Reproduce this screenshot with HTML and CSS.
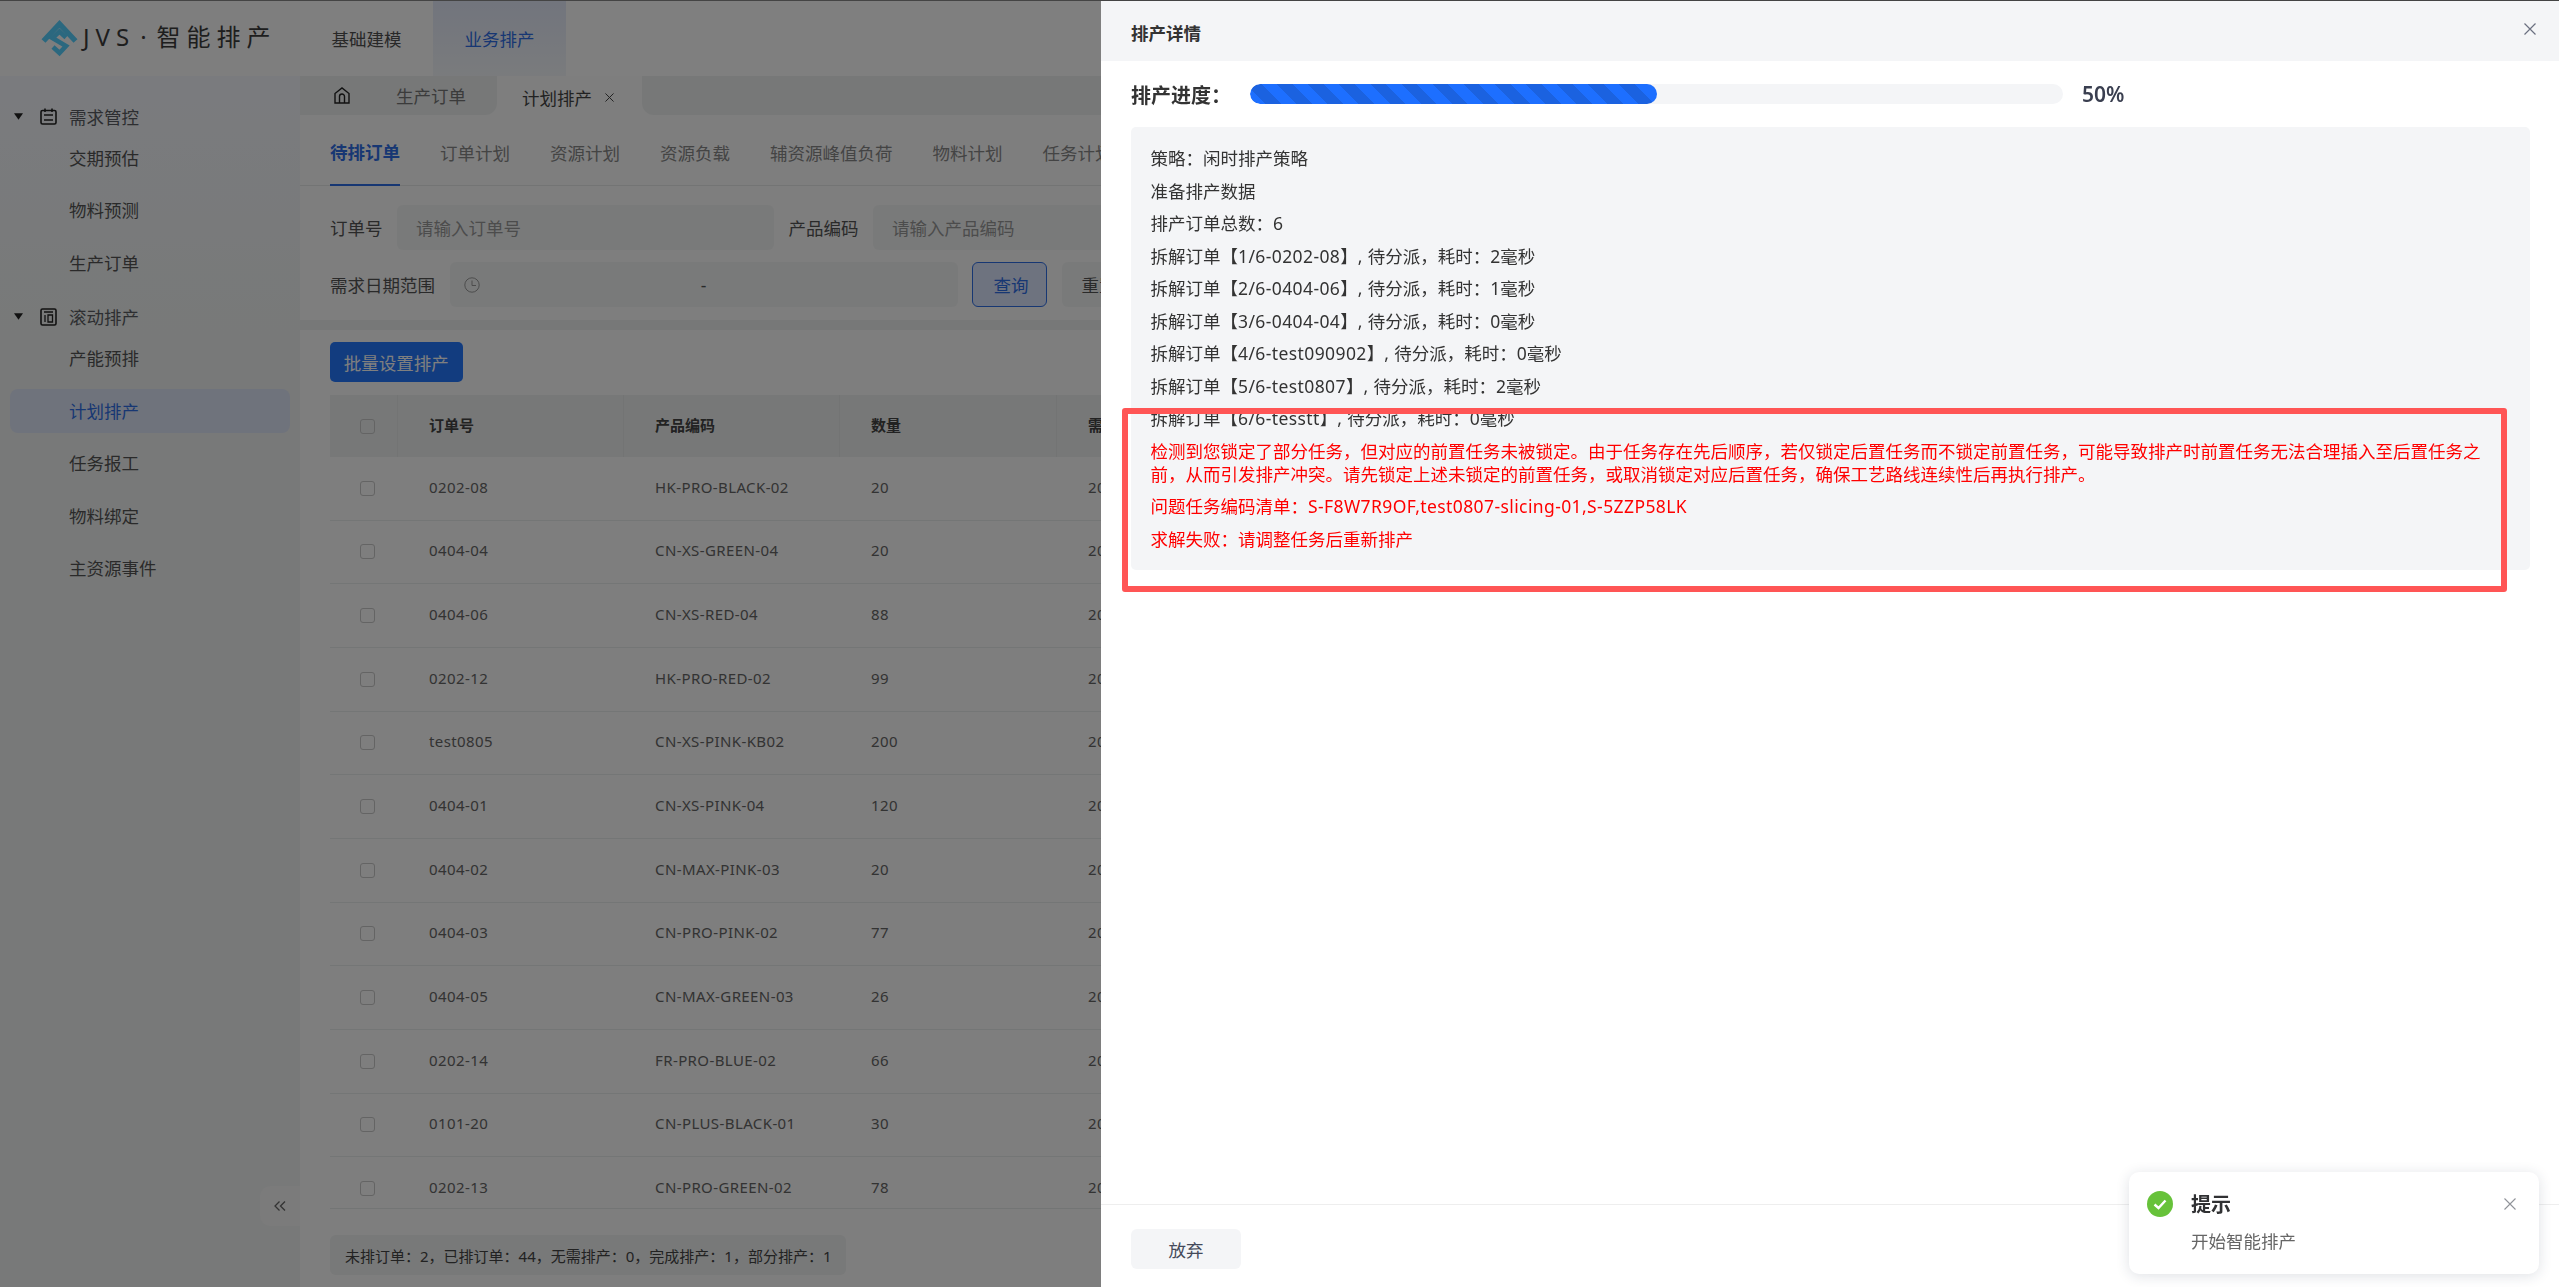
FILE: index.html
```html
<!DOCTYPE html>
<html lang="zh-CN">
<head>
<meta charset="utf-8">
<title>JVS 智能排产</title>
<link rel="stylesheet" href="styles.css">
</head>
<body>
<div class="page">
  <header class="topbar">
    <div class="brand">
      <svg class="brand-mark" viewBox="0 0 37 37" width="37" height="37"><path d="M2.5 21 L18.5 4 L34.5 21" fill="none" stroke="#56d0ff" stroke-width="5.4"/><path d="M25 17.5 L18.5 11.5 L11.5 18 L25 26 L18.5 33 L12 27" fill="none" stroke="#56d0ff" stroke-width="4.6"/></svg>
      <span class="brand-name">JVS<span class="brand-dot">·</span>智能排产</span>
    </div>
    <nav class="topnav">
      <a class="topnav-item">基础建模</a>
      <a class="topnav-item is-active">业务排产</a>
    </nav>
  </header>
  <div class="shell">
    <aside class="sidebar">
      <div class="menu">
        <div class="menu-head">
          <svg class="caret" viewBox="0 0 10 7" width="9" height="7"><path d="M0 0H10L5 7Z"/></svg>
          <svg class="menu-icon" viewBox="0 0 17 17" width="17" height="17"><rect x="1" y="2.5" width="15" height="13.5" rx="1.5" fill="none" stroke="#222" stroke-width="1.6"/><path d="M5 0.5V4M12 0.5V4M4 7H13M4 12H13" fill="none" stroke="#222" stroke-width="1.6"/></svg>
          <span>需求管控</span>
        </div>
        <a class="menu-item">交期预估</a>
        <a class="menu-item">物料预测</a>
        <a class="menu-item">生产订单</a>
        <div class="menu-head">
          <svg class="caret" viewBox="0 0 10 7" width="9" height="7"><path d="M0 0H10L5 7Z"/></svg>
          <svg class="menu-icon" viewBox="0 0 17 18" width="17" height="18"><rect x="1" y="1" width="15" height="16" rx="1.5" fill="none" stroke="#222" stroke-width="1.6"/><path d="M4 4H13M5 7V14M8 7H12.5V14H8Z" fill="none" stroke="#222" stroke-width="1.3"/></svg>
          <span>滚动排产</span>
        </div>
        <a class="menu-item">产能预排</a>
        <a class="menu-item is-active">计划排产</a>
        <a class="menu-item">任务报工</a>
        <a class="menu-item">物料绑定</a>
        <a class="menu-item">主资源事件</a>
      </div>
      <button class="collapse-btn" type="button" aria-label="收起">
        <svg viewBox="0 0 12 12" width="12" height="12"><path d="M5.5 1.5 L1 6 L5.5 10.5 M11 1.5 L6.5 6 L11 10.5" fill="none" stroke="#666" stroke-width="1.3"/></svg>
      </button>
    </aside>
    <main class="content">
      <div class="tabs">
        <div class="tabs-left">
          <svg class="home" viewBox="0 0 16 17" width="16" height="17"><path d="M1 16V6.5L8 1L15 6.5V16Z M5.5 16V9.5A2.5 2.5 0 0 1 10.500 9.5V16" fill="none" stroke="#222" stroke-width="1.4"/></svg>
          <span class="tab-text">生产订单</span>
        </div>
        <div class="tab-active">
          <span>计划排产</span>
          <svg viewBox="0 0 10 10" width="9" height="9"><path d="M0.500 0.500L9.500 9.500M9.500 0.500L0.500 9.500" stroke="#444" stroke-width="1.1"/></svg>
        </div>
        <div class="tabs-rest"></div>
      </div>
      <div class="subtabs">
        <a class="subtab is-active">待排订单</a>
        <a class="subtab">订单计划</a>
        <a class="subtab">资源计划</a>
        <a class="subtab">资源负载</a>
        <a class="subtab">辅资源峰值负荷</a>
        <a class="subtab">物料计划</a>
        <a class="subtab">任务计划</a>
      </div>
      <section class="filters">
        <div class="filter-row">
          <label class="filter-label">订单号</label>
          <div class="field">请输入订单号</div>
          <label class="filter-label">产品编码</label>
          <div class="field">请输入产品编码</div>
        </div>
        <div class="filter-row">
          <label class="filter-label">需求日期范围</label>
          <div class="range">
            <svg viewBox="0 0 16 16" width="16" height="16"><circle cx="8" cy="8" r="7.200" fill="none" stroke="#999" stroke-width="1"/><path d="M8 3.500V8.500H12" fill="none" stroke="#999" stroke-width="1"/></svg>
            <span class="range-dash">-</span>
          </div>
          <button class="btn-query" type="button">查询</button>
          <button class="btn-reset" type="button">重置</button>
        </div>
      </section>
      <div class="divider"></div>
      <section class="list">
        <button class="btn-primary" type="button">批量设置排产</button>
        <div class="table">
          <div class="tr th">
            <div class="td td-check"><i class="check"></i></div>
            <div class="td">订单号</div><div class="td">产品编码</div><div class="td">数量</div><div class="td">需求日期</div>
          </div>
          <div class="tr"><div class="td td-check"><i class="check"></i></div><div class="td">0202-08</div><div class="td">HK-PRO-BLACK-02</div><div class="td">20</div><div class="td">2025-09-30</div></div>
          <div class="tr"><div class="td td-check"><i class="check"></i></div><div class="td">0404-04</div><div class="td">CN-XS-GREEN-04</div><div class="td">20</div><div class="td">2025-09-30</div></div>
          <div class="tr"><div class="td td-check"><i class="check"></i></div><div class="td">0404-06</div><div class="td">CN-XS-RED-04</div><div class="td">88</div><div class="td">2025-09-30</div></div>
          <div class="tr"><div class="td td-check"><i class="check"></i></div><div class="td">0202-12</div><div class="td">HK-PRO-RED-02</div><div class="td">99</div><div class="td">2025-09-30</div></div>
          <div class="tr"><div class="td td-check"><i class="check"></i></div><div class="td">test0805</div><div class="td">CN-XS-PINK-KB02</div><div class="td">200</div><div class="td">2025-09-30</div></div>
          <div class="tr"><div class="td td-check"><i class="check"></i></div><div class="td">0404-01</div><div class="td">CN-XS-PINK-04</div><div class="td">120</div><div class="td">2025-09-30</div></div>
          <div class="tr"><div class="td td-check"><i class="check"></i></div><div class="td">0404-02</div><div class="td">CN-MAX-PINK-03</div><div class="td">20</div><div class="td">2025-09-30</div></div>
          <div class="tr"><div class="td td-check"><i class="check"></i></div><div class="td">0404-03</div><div class="td">CN-PRO-PINK-02</div><div class="td">77</div><div class="td">2025-09-30</div></div>
          <div class="tr"><div class="td td-check"><i class="check"></i></div><div class="td">0404-05</div><div class="td">CN-MAX-GREEN-03</div><div class="td">26</div><div class="td">2025-09-30</div></div>
          <div class="tr"><div class="td td-check"><i class="check"></i></div><div class="td">0202-14</div><div class="td">FR-PRO-BLUE-02</div><div class="td">66</div><div class="td">2025-09-30</div></div>
          <div class="tr"><div class="td td-check"><i class="check"></i></div><div class="td">0101-20</div><div class="td">CN-PLUS-BLACK-01</div><div class="td">30</div><div class="td">2025-09-30</div></div>
          <div class="tr"><div class="td td-check"><i class="check"></i></div><div class="td">0202-13</div><div class="td">CN-PRO-GREEN-02</div><div class="td">78</div><div class="td">2025-09-30</div></div>
        </div>
        <div class="summary">未排订单：2，已排订单：44，无需排产：0，完成排产：1，部分排产：1</div>
      </section>
    </main>
  </div>
</div>

<div class="mask"></div>

<aside class="drawer">
  <div class="drawer-head">
    <span class="drawer-title">排产详情</span>
    <svg viewBox="0 0 12 12" width="12" height="12"><path d="M0.500 0.500L11.500 11.500M11.500 0.500L0.500 11.500" stroke="#6b7080" stroke-width="1.200"/></svg>
  </div>
  <div class="drawer-body">
    <div class="progress-row">
      <span class="progress-label">排产进度：</span>
      <div class="progress-track"><div class="progress-fill" style="width:50%"></div></div>
      <span class="progress-value">50%</span>
    </div>
    <div class="log">
      <p>策略：闲时排产策略</p>
      <p>准备排产数据</p>
      <p>排产订单总数：6</p>
      <p>拆解订单【<span class="code">1/6-0202-08</span>】<span class="code">, </span>待分派，耗时：2毫秒</p>
      <p>拆解订单【<span class="code">2/6-0404-06</span>】<span class="code">, </span>待分派，耗时：1毫秒</p>
      <p>拆解订单【<span class="code">3/6-0404-04</span>】<span class="code">, </span>待分派，耗时：0毫秒</p>
      <p>拆解订单【<span class="code">4/6-test090902</span>】<span class="code">, </span>待分派，耗时：0毫秒</p>
      <p>拆解订单【<span class="code">5/6-test0807</span>】<span class="code">, </span>待分派，耗时：2毫秒</p>
      <p>拆解订单【<span class="code">6/6-tesstt</span>】<span class="code">, </span>待分派，耗时：0毫秒</p>
      <p class="err">检测到您锁定了部分任务，但对应的前置任务未被锁定。由于任务存在先后顺序，若仅锁定后置任务而不锁定前置任务，可能导致排产时前置任务无法合理插入至后置任务之前，从而引发排产冲突。请先锁定上述未锁定的前置任务，或取消锁定对应后置任务，确保工艺路线连续性后再执行排产。</p>
      <p class="err">问题任务编码清单：<span class="code">S-F8W7R9OF,test0807-slicing-01,S-5ZZP58LK</span></p>
      <p class="err">求解失败：请调整任务后重新排产</p>
    </div>
    <div class="mark-box"></div>
  </div>
  <div class="drawer-foot">
    <button class="btn-abort" type="button">放弃</button>
  </div>
</aside>

<div class="notice">
  <svg class="notice-icon" viewBox="0 0 26 26" width="26" height="26"><circle cx="13" cy="13" r="13" fill="#67c23a"/><path d="M7.500 13.500L11.500 17L18.500 9.500" fill="none" stroke="#fff" stroke-width="2.400"/></svg>
  <div class="notice-main">
    <div class="notice-title">提示</div>
    <div class="notice-text">开始智能排产</div>
  </div>
  <svg class="notice-close" viewBox="0 0 12 12" width="12" height="12"><path d="M0.500 0.500L11.500 11.500M11.500 0.500L0.500 11.500" stroke="#909399" stroke-width="1.100"/></svg>
</div>
</body>
</html>
```
FILE: styles.css
```css
* { box-sizing: border-box; }
html, body { margin: 0; height: 100%; overflow: hidden; }
body {
  font-family: "Noto Sans", "Noto Sans CJK SC", sans-serif;
  font-size: 17.5px;
  color: #5a5c60;
  background: #fcfcfc;
}
button { font: inherit; border: 0; padding: 0; }
p { margin: 0; }
.page { height: 1287px; display: flex; flex-direction: column; border-top: 1px solid #888; }

/* top bar */
.topbar { height: 75px; display: flex; background: #ffffff; flex: none; }
.brand { width: 300px; display: flex; align-items: flex-start; padding: 19px 0 0 41px; background: #fcfdfd; }
.brand-name { margin: 0 0 0 5px; font-size: 24px; line-height: 33px; letter-spacing: 6px; color: #3c3c3c; white-space: nowrap; }
.brand-dot { margin: 0 4px 0 5px; }
.topnav { display: flex; }
.topnav-item { width: 133px; display: flex; align-items: center; justify-content: center; color: #505050; }
.topnav-item.is-active { background: linear-gradient(#e4eafa, #f4f7fb); color: #2f6fe6; }

/* shell */
.shell { flex: 1; display: flex; min-height: 0; }
.sidebar { width: 300px; flex: none; position: relative; background: linear-gradient(#f5f7fd 0, #f0f3f2 260px); }
.menu { padding-top: 20px; display: flex; flex-direction: column; }
.menu-head { height: 40px; display: flex; align-items: center; padding-left: 14px; color: #5a5d62; }
.menu-head span { margin-left: 12px; }
.menu-item + .menu-head { margin-top: 11.5px; }
.caret { fill: #222; margin-right: 17px; }
.menu-icon { flex: none; }
.menu-item { height: 44px; margin: 0 10px; padding: 0 0 2px 59px; display: flex; align-items: center; border-radius: 8px; color: #555; }
.menu-item + .menu-item { margin-top: 8.500px; }
.menu-item.is-active { background: #dfe6f8; color: #2f6fe6; }
.collapse-btn { position: absolute; right: 0; bottom: 61px; width: 40px; height: 40px; border-radius: 10px 0 0 10px; background: #f6f6f6; display: flex; align-items: center; justify-content: center; }

/* main */
.content { flex: 1; min-width: 0; display: flex; flex-direction: column; background: #fcfcfc; }
.tabs { height: 39px; display: flex; flex: none; }
.tabs-left { width: 197px; display: flex; align-items: center; padding-left: 34px; background: #eef1f1; border-radius: 0 0 12px 0; }
.tab-text { margin-left: 46px; color: #777; }
.home { flex: none; }
.tab-active { width: 145px; margin-top: 6px; padding: 0 0 2px 25px; display: flex; align-items: center; border-radius: 12px 12px 0 0; background: #fcfcfc; color: #444; }
.tab-active svg { margin-left: 13px; }
.tabs-rest { flex: 1; background: #eef1f1; border-radius: 0 0 0 12px; }

.subtabs { height: 71px; display: flex; gap: 40px; padding-left: 30px; border-bottom: 1px solid #e6e8e8; flex: none; }
.subtab { display: flex; align-items: center; padding-top: 3px; color: #888; height: 71px; white-space: nowrap; }
.subtab.is-active { color: #2f6fe6; font-weight: 700; border-bottom: 2.500px solid #2f6fe6; }

.filters { padding: 19px 0 13px 30px; display: flex; flex-direction: column; gap: 12px; flex: none; }
.filter-row { display: flex; gap: 14.500px; height: 45px; align-items: center; }
.filter-label { color: #555; white-space: nowrap; }
.field { width: 377px; height: 45px; padding-left: 19px; display: flex; align-items: center; background: #f3f5f5; border-radius: 6px; color: #999; }
.range { width: 508px; height: 45px; padding: 0 14px; display: grid; grid-template-columns: 1fr auto 1fr; align-items: center; background: #f3f5f5; border-radius: 6px; color: #555; }
.range-dash { grid-column: 2; }
.range svg { grid-column: 1; grid-row: 1; }
.btn-query { width: 75px; height: 45px; padding-left: 3px; border: 1.500px solid #2f6fe6; border-radius: 6px; background: #dce6ff; color: #2f6fe6; }
.btn-reset { width: 75px; height: 45px; border-radius: 6px; background: #f3f5f5; color: #555; }

.divider { height: 10px; background: #eff1f1; flex: none; }
.list { padding: 12px 30px 0; flex: 1; min-height: 0; }
.btn-primary { display: block; width: 132.500px; height: 40px; border-radius: 5px; background: #2478ff; color: #fff; }
.table { margin-top: 13px; height: 814px; overflow: hidden; border-bottom: 1px solid #e6eaea; font-size: 15px; color: #666; letter-spacing: 0.4px; }
.tr { display: grid; grid-template-columns: 68px 226px 216px 217px 1fr; height: 63.670px; border-bottom: 1px solid #e9ecec; }
.td { display: flex; align-items: center; padding: 0 0 3px 31px; white-space: nowrap; }
.td-check { padding: 0 0 0 30px; }
.th { height: 62px; background: #eef1f1; border-bottom: 0; color: #444; font-weight: 700; letter-spacing: 0; }
.th .td { border-right: 1px solid #e6e8e8; }
.check { width: 15px; height: 15px; border: 1px solid #c8c8c8; border-radius: 3px; display: block; }
.summary { display: inline-flex; align-items: center; height: 40px; margin-top: 26px; padding: 0 15px; background: #f0f2f2; border-radius: 6px; font-size: 15px; color: #444; }

/* mask and drawer */
.mask { position: fixed; inset: 0; background: rgba(0, 0, 0, 0.5); }
.drawer { position: fixed; left: 1101px; right: 0; top: 1px; bottom: 0; display: flex; flex-direction: column; background: #fff; border-radius: 4px 0 0 0; color: #333; }
.drawer-head { height: 60px; flex: none; display: flex; align-items: center; justify-content: space-between; padding: 0 23px 4px 30px; background: #f4f5f7; }
.drawer-title { margin-top: 8px; font-weight: 700; color: #333; line-height: 24px; }
.drawer-body { flex: 1; min-height: 0; padding: 0 29px 0 30px; position: relative; }
.progress-row { height: 66px; display: flex; align-items: center; }
.progress-label { width: 119px; flex: none; font-size: 20px; font-weight: 700; color: #333; white-space: nowrap; }
.progress-track { width: 813px; height: 20px; border-radius: 10px; background: #f4f5f7; overflow: hidden; flex: none; }
.progress-fill { height: 100%; border-radius: 10px; background: repeating-linear-gradient(45deg, #1d6fff 0, #1d6fff 11px, #1b62e0 11px, #1b62e0 22px); }
.progress-value { margin-left: 19px; font-size: 21px; font-weight: 600; color: #3a3f50; }
.log { height: 443px; padding: 20px 40px 0 19.500px; background: #f4f5f7; border-radius: 5px; line-height: 22.750px; color: #333; }
.log p { margin-bottom: 9.800px; }
.log .err { color: #ff0000; }
.code { letter-spacing: 0.4px; }
.mark-box { position: absolute; left: 21px; top: 347px; width: 1385px; height: 184px; border: 6px solid #ff5555; border-radius: 3px; }
.drawer-foot { height: 83px; flex: none; padding: 24px 30px 0; border-top: 1px solid #eeeeee; }
.btn-abort { width: 110px; height: 40px; background: #f4f5f7; border-radius: 6px; color: #444a5a; }

/* notice */
.notice { position: fixed; left: 2129px; top: 1172px; width: 410px; height: 102px; display: flex; padding: 19px 0 0 18px; background: #fff; border-radius: 10px; box-shadow: 0 2px 14px rgba(30, 40, 70, 0.14); }
.notice-icon { flex: none; }
.notice-main { margin-left: 18px; flex: 1; }
.notice-title { font-size: 20px; line-height: 28px; font-weight: 700; color: #303133; }
.notice-text { margin-top: 10px; line-height: 24px; color: #666; }
.notice-close { margin: 7px 23px 0 0; flex: none; }
```
